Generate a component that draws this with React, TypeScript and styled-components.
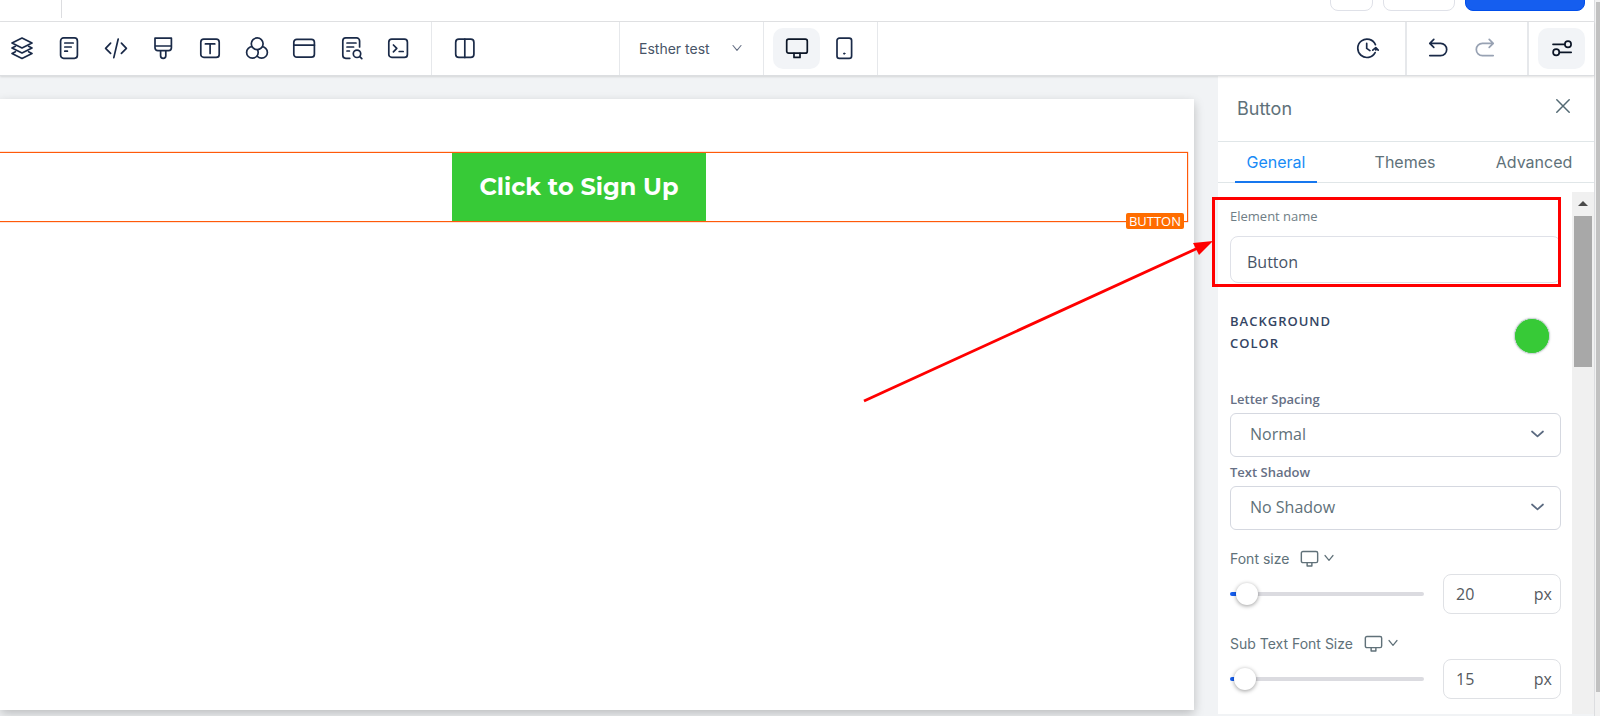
import React, { useState } from "react";
import styled, { createGlobalStyle, css } from "styled-components";

const ui = `Inter, "Liberation Sans", sans-serif`;
const form = `"Segoe UI", "Open Sans", "Noto Sans", sans-serif`;

const GlobalStyle = createGlobalStyle`
  *, *::before, *::after { box-sizing: border-box; }
  body { margin: 0; background: #fff; font-family: ${ui}; }
  button, input, select { font: inherit; color: inherit; margin: 0; }
`;

/* ---------- shell ---------- */

const Shell = styled.div`
  display: flex;
  min-height: 100vh;
`;

const Editor = styled.div`
  flex: 1;
  min-width: 0;
  display: flex;
  flex-direction: column;
  border-right: 1px solid #dcdde0;
`;

const PageScroll = styled.div`
  flex: none;
  width: 5px;
  padding: 2px 0 24px 1px;
  background: #f1f1f1;
  display: flex;

  &::before {
    content: "";
    flex: 1;
    background: #c1c1c1;
  }
`;

const TopBar = styled.header`
  height: 22px;
  overflow: hidden;
  display: flex;
  align-items: flex-end;
  gap: 10px;
  padding: 0 9px 10px 0;
  border-bottom: 1px solid #e1e2e4;
`;

const TopBarStart = styled.div`
  align-self: flex-start;
  width: 62px;
  height: 18px;
  margin-right: auto;
  border-right: 1px solid #dcdde0;
`;

const TopButton = styled.button<{ $width: number; $primary?: boolean }>`
  flex: none;
  width: ${(p) => p.$width}px;
  height: 40px;
  border: 1px solid ${(p) => (p.$primary ? "#004eeb" : "#dfe1e8")};
  border-radius: 8px;
  background: ${(p) => (p.$primary ? "#155eef" : "#fff")};
`;

/* ---------- toolbar ---------- */

const Toolbar = styled.nav`
  position: relative;
  z-index: 1;
  display: flex;
  height: 54px;
  background: #fff;
  border-bottom: 1px solid #dcdee1;
  box-shadow: 0 1px 2px rgba(0, 0, 0, 0.12);
`;

const ToolGroup = styled.div<{ $start?: number; $end?: number; $width?: number; $rule?: number }>`
  flex: none;
  display: flex;
  align-items: center;
  gap: 5px;
  width: ${(p) => (p.$width ? `${p.$width}px` : "auto")};
  padding: 0 ${(p) => p.$end ?? 0}px 0 ${(p) => p.$start ?? 0}px;
  border-right: ${(p) => p.$rule ?? 1}px solid #e6e8eb;
`;

const DeviceGroup = styled(ToolGroup)`
  gap: 0;
`;

const Spacer = styled.div`
  flex: 1;
`;

const ToolButton = styled.button<{ $wide?: boolean; $active?: boolean }>`
  flex: none;
  display: flex;
  align-items: center;
  justify-content: center;
  width: ${(p) => (p.$wide ? 47 : 42)}px;
  height: 41px;
  padding: 0 0 1px;
  border: 0;
  border-radius: 10px;
  background: ${(p) => (p.$active ? "#f2f4f7" : "transparent")};
  color: ${(p) => (p.$active ? "#0b1526" : "#1a2a48")};

  &:disabled {
    color: #98a2b3;
  }
`;

const PagePicker = styled.div`
  position: relative;
  display: flex;
  align-items: center;
  flex: 1;
  padding-bottom: 1px;
  color: #667085;
`;

const PageSelect = styled.select`
  appearance: none;
  width: 100%;
  height: 32px;
  padding: 0;
  border: 0;
  background: transparent;
  font-size: 14px;
  color: #475467;
`;

const SelectArrow = styled.span<{ $right: number }>`
  position: absolute;
  right: ${(p) => p.$right}px;
  top: 0;
  bottom: 0;
  display: flex;
  align-items: center;
  padding-bottom: 2px;
  pointer-events: none;
`;

/* ---------- canvas ---------- */

const Workspace = styled.main`
  flex: 1;
  display: flex;
  gap: 24px;
  padding-bottom: 2px;
  background: #f1f3f5;
`;

const Canvas = styled.section`
  flex: 1;
  min-width: 0;
  margin: 23px 0 4px;
  padding: 53px 6px 0 0;
  background: #fff;
  box-shadow: 0 4px 10px rgba(0, 0, 0, 0.22);
`;

const Selection = styled.div`
  position: relative;
  display: flex;
  justify-content: center;
  padding-right: 29px;
  border: 1px solid #ff5a0a;
  border-left: 0;
  box-shadow: 0 0 1px #ff5a0a;
`;

const SignUp = styled.button`
  width: 254px;
  height: 68px;
  padding: 0 0 2px;
  border: 0;
  background: #37ca37;
  color: #fff;
  font-family: Montserrat, Inter, sans-serif;
  font-size: 24px;
  font-weight: 700;
`;

const Tag = styled.span`
  position: absolute;
  right: 3px;
  bottom: -8px;
  padding: 0 3px;
  border-radius: 2px;
  background: #ff6d00;
  color: #fff;
  font-family: ${form};
  font-size: 13px;
  font-weight: 500;
  line-height: 16px;
`;

/* ---------- panel ---------- */

const Panel = styled.aside`
  position: relative;
  flex: none;
  width: 376px;
  display: flex;
  flex-direction: column;
  background: #fff;
`;

const PanelHead = styled.header`
  display: flex;
  align-items: center;
  justify-content: space-between;
  height: 66px;
  padding: 0 24px 0 19px;
  border-bottom: 1px solid #e0e6e8;
`;

const PanelTitle = styled.h2`
  margin: 0;
  font-size: 18px;
  font-weight: 400;
  line-height: 24px;
  color: #607179;
`;

const CloseButton = styled.button`
  display: flex;
  padding: 0 0 6px;
  border: 0;
  background: none;
  color: #546a74;
`;

const Tabs = styled.div`
  display: flex;
  gap: 47px;
  height: 41px;
  padding-left: 17px;
  border-bottom: 1px solid #e0e6e8;
`;

const Tab = styled.button<{ $active?: boolean }>`
  width: 82px;
  height: 41px;
  padding: 0;
  border: 0;
  border-bottom: 2px solid ${(p) => (p.$active ? "#1677ee" : "transparent")};
  background: none;
  font-size: 16px;
  color: ${(p) => (p.$active ? "#188bf6" : "#607179")};
`;

const PanelScroller = styled.div`
  flex: 1;
  display: flex;
  justify-content: space-between;
  padding-top: 9px;
`;

const Controls = styled.form`
  flex: 1;
  min-width: 0;
  margin: 0;
  padding: 14px 11px 0 12px;
`;

const PanelScroll = styled.div`
  flex: none;
  width: 22px;
  display: flex;
  flex-direction: column;
  align-items: center;
  padding-top: 9px;
  gap: 10px;
  background: #f0f0f0;
`;

const PanelThumb = styled.div`
  width: 18px;
  height: 151px;
  background: #a8a8a8;
`;

const ScrollArrow = styled.svg`
  display: block;
`;

const NameField = styled.div`
  position: relative;
  display: flex;
  flex-direction: column;
  gap: 10px;
`;

const NameLabel = styled.label`
  font-family: ${form};
  font-size: 13px;
  line-height: 20px;
  color: #6f7e86;
`;

const NameInput = styled.input`
  width: 100%;
  height: 47px;
  padding: 4px 16px 0;
  border: 1px solid #dfe1e8;
  border-radius: 8px;
  background: #fff;
  font-family: ${form};
  font-size: 16px;
  color: #475467;
`;

const Highlight = styled.div`
  position: absolute;
  top: -9px;
  right: 0;
  bottom: -4px;
  left: -18px;
  border: 3px solid #ff0000;
  pointer-events: none;
`;

const Pointer = styled.svg`
  position: absolute;
  top: 31px;
  right: 347px;
  pointer-events: none;
`;

const ColorRow = styled.div`
  display: flex;
  align-items: center;
  justify-content: space-between;
  margin-top: 27px;
  padding-right: 11px;
`;

const ColorLabel = styled.label`
  width: 130px;
  padding-bottom: 8px;
  font-family: ${form};
  font-size: 13px;
  font-weight: 600;
  line-height: 22px;
  letter-spacing: 1px;
  text-transform: uppercase;
  color: #344563;
`;

const Swatch = styled.input`
  appearance: none;
  width: 36px;
  height: 36px;
  padding: 0;
  border: 1px solid #d5d8e2;
  border-radius: 50%;
  background: #37ca37;
  overflow: hidden;
  box-shadow: 0 0 2px rgba(16, 24, 40, 0.2);

  &::-webkit-color-swatch-wrapper { padding: 0; }
  &::-webkit-color-swatch { border: 0; border-radius: 50%; }
`;

const SelectList = styled.div`
  display: flex;
  flex-direction: column;
  gap: 5px;
  margin-top: 27px;
`;

const SelectField = styled.div`
  display: flex;
  flex-direction: column;
  gap: 4px;
`;

const SelectLabel = styled.label`
  font-family: ${form};
  font-size: 13px;
  font-weight: 600;
  line-height: 20px;
  color: #667085;
`;

const SelectBox = styled.div`
  position: relative;
  color: #5b6a80;
`;

const Select = styled.select`
  appearance: none;
  display: block;
  width: 100%;
  height: 44px;
  padding: 0 40px 2px 19px;
  border: 1px solid #d5d8e0;
  border-radius: 6px;
  background: #fff;
  font-family: ${form};
  font-size: 16px;
  color: #607179;
`;

const SizeList = styled.div`
  display: flex;
  flex-direction: column;
  gap: 20px;
  margin-top: 19px;
`;

const SizeField = styled.div`
  display: flex;
  flex-direction: column;
  gap: 5px;
`;

const SizeHead = styled.div`
  display: flex;
  align-items: center;
  height: 20px;
  gap: 11px;
  font-size: 14px;
  line-height: 20px;
  color: #607179;
`;

const DeviceButton = styled.button`
  display: flex;
  align-items: center;
  gap: 5px;
  padding: 0 0 2px;
  border: 0;
  background: none;
`;

const SizeRow = styled.div`
  display: flex;
  align-items: center;
  gap: 19px;
`;

const thumb = css`
  appearance: none;
  width: 22px;
  height: 22px;
  margin-top: -9px;
  border: 0;
  border-radius: 50%;
  background: #fff;
  box-shadow: 0 1px 4px rgba(0, 0, 0, 0.4);
`;

const Slider = styled.input`
  appearance: none;
  flex: 1;
  min-width: 0;
  height: 24px;
  background: transparent;

  &::-webkit-slider-runnable-track {
    height: 4px;
    border-radius: 2px;
    background: linear-gradient(to right, #155eef 12px, #dbdbe0 12px);
  }
  &::-webkit-slider-thumb { ${thumb} }
`;

const UnitBox = styled.div`
  flex: none;
  display: flex;
  align-items: center;
  width: 118px;
  height: 40px;
  padding: 0 8px 0 12px;
  border: 1px solid #dfe1e5;
  border-radius: 8px;
  font-family: ${form};
  font-size: 16px;
  color: #555a60;
`;

const UnitInput = styled.input`
  flex: 1;
  min-width: 0;
  padding: 0;
  border: 0;
  background: none;
`;

/* ---------- icons ---------- */

const Icon = ({ children, size = 24, weight = 1.7 }: { children: React.ReactNode; size?: number; weight?: number }) => (
  <svg
    width={size}
    height={size}
    viewBox="0 0 24 24"
    fill="none"
    stroke="currentColor"
    strokeWidth={weight}
    strokeLinecap="round"
    strokeLinejoin="round"
    aria-hidden="true"
  >
    {children}
  </svg>
);

const Chevron = ({ width, weight }: { width: number; weight: number }) => (
  <svg width={width} height={8} viewBox={`0 0 ${width} 8`} fill="none" stroke="currentColor" strokeWidth={weight} strokeLinecap="round" strokeLinejoin="round" aria-hidden="true">
    <path d={`M1 1.5 L${width / 2} 6.3 L${width - 1} 1.5`} />
  </svg>
);

const tools: { name: string; art: React.ReactNode }[] = [
  {
    name: "Sections",
    art: (
      <>
        <path d="M12 2 22 7 12 12 2 7Z" />
        <path d="M5.4 10.3 2 12l10 5 10-5-3.4-1.7" />
        <path d="M5.4 15.7 2 17.4l10 5 10-5-3.4-1.7" />
      </>
    ),
  },
  {
    name: "Rows",
    art: (
      <>
        <rect x="3.6" y="1.9" width="16.8" height="20.4" rx="3" />
        <path d="M7.8 7h8.4M7.8 11h6.4M7.8 15.2h2.6" />
      </>
    ),
  },
  { name: "Code", art: <path d="M6.6 7.2 1.6 12.4l5 5M17.4 7.2l5 5.2-5 5M14.2 3 9.8 21.6" /> },
  {
    name: "Styles",
    art: (
      <>
        <path d="M4 2.2h16.4v9.6a2.8 2.8 0 0 1-2.8 2.8H6.8A2.8 2.8 0 0 1 4 11.8ZM4 10h16.4" />
        <path d="M9.6 14.8v5a2.6 2.6 0 0 0 5.2 0v-5" />
      </>
    ),
  },
  {
    name: "Text",
    art: (
      <>
        <rect x="2.8" y="3.2" width="18.4" height="18.2" rx="3" />
        <path d="M7.4 7.9h9.4M12.1 7.9v9.6" />
      </>
    ),
  },
  {
    name: "Colors",
    art: (
      <>
        <circle cx="16.6" cy="16.4" r="5.8" />
        <circle cx="7.4" cy="16.4" r="5.8" fill="#fff" />
        <path d="M11.2 13.2a5.800 5.800 0 0 0 1.200 7.200" strokeWidth="0" />
        <circle cx="12.2" cy="7.8" r="5.9" fill="#fff" />
      </>
    ),
  },
  {
    name: "Popup",
    art: (
      <>
        <rect x="1.8" y="3.3" width="20.6" height="17.9" rx="3" />
        <path d="M1.8 9.2h20.6" />
      </>
    ),
  },
  {
    name: "SEO",
    art: (
      <>
        <path d="M20.6 11V4.9a3 3 0 0 0-3-3H6.8a3 3 0 0 0-3 3v14.400a3 3 0 0 0 3 3h4" />
        <path d="M8 7h9M8 11h6.6M8 15h2.4" />
        <circle cx="18" cy="17.8" r="3.7" />
        <path d="m20.8 20.6 2 2" />
      </>
    ),
  },
  {
    name: "Custom script",
    art: (
      <>
        <rect x="2.8" y="3.2" width="18.6" height="18.2" rx="3" />
        <path d="m7.4 9 3.4 3.4-3.4 3.4M13.200 15.5h4" />
      </>
    ),
  },
];

const Desktop = (
  <>
    <rect x="1.7" y="3.2" width="20.6" height="14" rx="2" />
    <path d="M9 17.4v4h6v-4" />
  </>
);

/* ---------- pieces ---------- */

const SizeControl = ({ id, label, initial, min, max }: { id: string; label: string; initial: number; min: number; max: number }) => {
  const [value, setValue] = useState(initial);
  return (
    <SizeField>
      <SizeHead>
        <label htmlFor={id}>{label}</label>
        <DeviceButton type="button" aria-label={`${label} device`}>
          <Icon size={19} weight={1.8}>{Desktop}</Icon>
          <Chevron width={10} weight={1.2} />
        </DeviceButton>
      </SizeHead>
      <SizeRow>
        <Slider type="range" aria-label={label} min={min} max={max} value={value} onChange={(e) => setValue(Number(e.target.value))} />
        <UnitBox>
          <UnitInput id={id} value={value} onChange={(e) => setValue(Number(e.target.value) || min)} />
          <span>px</span>
        </UnitBox>
      </SizeRow>
    </SizeField>
  );
};

const SelectControl = ({ id, label, options }: { id: string; label: string; options: string[] }) => (
  <SelectField>
    <SelectLabel htmlFor={id}>{label}</SelectLabel>
    <SelectBox>
      <Select id={id}>
        {options.map((o) => (
          <option key={o}>{o}</option>
        ))}
      </Select>
      <SelectArrow $right={17}>
        <Chevron width={13} weight={1.7} />
      </SelectArrow>
    </SelectBox>
  </SelectField>
);

export default function App() {
  const [name, setName] = useState("Button");
  const [color, setColor] = useState("#37ca37");

  return (
    <>
      <GlobalStyle />
      <Shell>
        <Editor>
          <TopBar>
            <TopBarStart />
            <TopButton $width={43} aria-label="More" />
            <TopButton $width={72} aria-label="Preview" />
            <TopButton $width={120} $primary aria-label="Publish" />
          </TopBar>

          <Toolbar aria-label="Builder tools">
            <ToolGroup $start={1} $end={12}>
              {tools.map((t) => (
                <ToolButton key={t.name} aria-label={t.name}>
                  <Icon>{t.art}</Icon>
                </ToolButton>
              ))}
            </ToolGroup>
            <ToolGroup $start={12} $width={188}>
              <ToolButton aria-label="Columns">
                <Icon>
                  <rect x="2.7" y="3.2" width="18.2" height="18.2" rx="3.2" />
                  <path d="M11.8 3.2v18.2" />
                </Icon>
              </ToolButton>
            </ToolGroup>
            <ToolGroup $start={19} $end={20} $width={144}>
              <PagePicker>
                <PageSelect aria-label="Page">
                  <option>Esther test</option>
                </PageSelect>
                <SelectArrow $right={1}>
                  <Chevron width={10} weight={1.1} />
                </SelectArrow>
              </PagePicker>
            </ToolGroup>
            <DeviceGroup $start={9} $end={10}>
              <ToolButton $wide $active aria-label="Desktop view">
                <Icon>{Desktop}</Icon>
              </ToolButton>
              <ToolButton $wide aria-label="Mobile view">
                <Icon>
                  <rect x="5" y="2.2" width="14.6" height="20.2" rx="2.4" />
                  <circle cx="12.2" cy="17.6" r="0.7" fill="currentColor" strokeWidth="1" />
                </Icon>
              </ToolButton>
            </DeviceGroup>
            <Spacer />
            <ToolGroup $end={17} $rule={2}>
              <ToolButton aria-label="Version history">
                <Icon>
                  <path d="M20.4 8.6a9.2 9.2 0 1 0-.3 8M11.7 7.4v5l3.2 2.200M17.800 14.200l3-2.600 2.400 2.600M20.800 12v2" />
                </Icon>
              </ToolButton>
            </ToolGroup>
            <ToolGroup $start={10} $end={21} $rule={2}>
              <ToolButton aria-label="Undo">
                <Icon>
                  <path d="M7.8 3.4 3.8 7.4l4 4M3.8 7.4h10.8a6 6 0 0 1 0 12.2H3.8" />
                </Icon>
              </ToolButton>
              <ToolButton aria-label="Redo" disabled>
                <Icon>
                  <path d="m16.2 3.4 4 4-4 4M20.2 7.4H9.4a6 6 0 0 0 0 12.2h10.8" />
                </Icon>
              </ToolButton>
            </ToolGroup>
            <DeviceGroup $start={9} $end={9} $rule={0}>
              <ToolButton $wide $active aria-label="Settings">
                <Icon>
                  <path d="M3 8.3h11.5M9.6 16.3h11.6" />
                  <circle cx="18" cy="8.3" r="3.1" />
                  <circle cx="6.2" cy="16.3" r="3.1" />
                </Icon>
              </ToolButton>
            </DeviceGroup>
          </Toolbar>

          <Workspace>
            <Canvas>
              <Selection>
                <SignUp>Click to Sign Up</SignUp>
                <Tag>BUTTON</Tag>
              </Selection>
            </Canvas>

            <Panel>
              <PanelHead>
                <PanelTitle>Button</PanelTitle>
                <CloseButton aria-label="Close">
                  <svg width="14" height="14" viewBox="0 0 14 14" fill="none" stroke="currentColor" strokeWidth="1.5" strokeLinecap="round" aria-hidden="true">
                    <path d="M.8.8 13.2 13.2M13.2.8.8 13.2" />
                  </svg>
                </CloseButton>
              </PanelHead>
              <Tabs role="tablist">
                <Tab role="tab" aria-selected $active>General</Tab>
                <Tab role="tab" aria-selected={false}>Themes</Tab>
                <Tab role="tab" aria-selected={false}>Advanced</Tab>
              </Tabs>
              <PanelScroller>
                <Controls onSubmit={(e) => e.preventDefault()}>
                  <NameField>
                    <NameLabel htmlFor="element-name">Element name</NameLabel>
                    <NameInput id="element-name" value={name} onChange={(e) => setName(e.target.value)} />
                    <Highlight />
                    <Pointer width="352" height="168" viewBox="0 0 352 168" aria-hidden="true">
                      <path d="M2 164 336 11" stroke="#ff0000" strokeWidth="2.8" fill="none" />
                      <path d="M351 4 331 6 337 18Z" fill="#ff0000" />
                    </Pointer>
                  </NameField>

                  <ColorRow>
                    <ColorLabel htmlFor="background-color">Background color</ColorLabel>
                    <Swatch id="background-color" type="color" value={color} onChange={(e) => setColor(e.target.value)} />
                  </ColorRow>

                  <SelectList>
                    <SelectControl id="letter-spacing" label="Letter Spacing" options={["Normal", "Wide", "Wider"]} />
                    <SelectControl id="text-shadow" label="Text Shadow" options={["No Shadow", "Light Shadow", "Strong Shadow"]} />
                  </SelectList>

                  <SizeList>
                    <SizeControl id="font-size" label="Font size" initial={20} min={14} max={186} />
                    <SizeControl id="sub-font-size" label="Sub Text Font Size" initial={15} min={11} max={183} />
                  </SizeList>
                </Controls>
                <PanelScroll aria-hidden="true">
                  <ScrollArrow width="10" height="5" viewBox="0 0 10 5">
                    <path d="M5 0 10 5H0Z" fill="#4a4a4a" />
                  </ScrollArrow>
                  <PanelThumb />
                </PanelScroll>
              </PanelScroller>
            </Panel>
          </Workspace>
        </Editor>
        <PageScroll aria-hidden="true" />
      </Shell>
    </>
  );
}
